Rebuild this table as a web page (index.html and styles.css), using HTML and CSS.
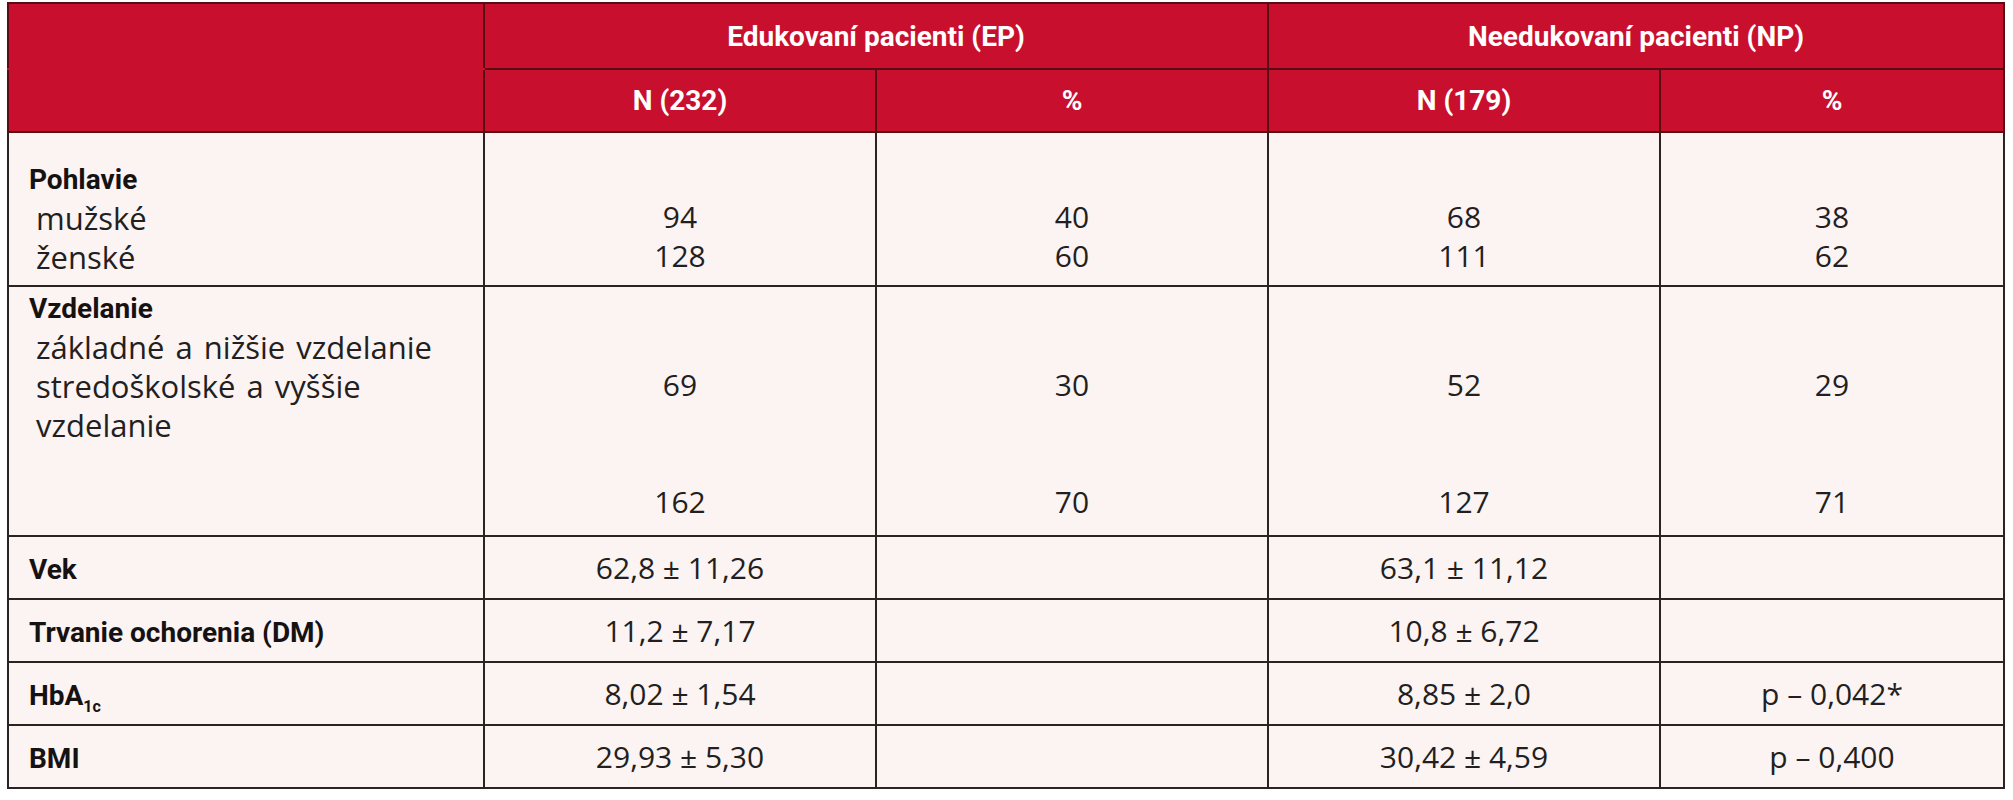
FILE: index.html
```html
<!DOCTYPE html>
<html lang="sk">
<head>
<meta charset="utf-8">
<title>Tabuľka</title>
<link rel="stylesheet" href="styles.css">
</head>
<body>
<table class="data">
  <colgroup>
    <col class="c-label">
    <col class="c-n">
    <col class="c-p">
    <col class="c-n">
    <col class="c-p2">
  </colgroup>
  <thead>
    <tr class="h1">
      <th></th>
      <th colspan="2">Edukovaní pacienti (EP)</th>
      <th colspan="2">Needukovaní pacienti (NP)</th>
    </tr>
    <tr class="h2">
      <th></th>
      <th>N (232)</th>
      <th>%</th>
      <th>N (179)</th>
      <th>%</th>
    </tr>
  </thead>
  <tbody>
    <tr class="multi r-sex">
      <td class="label"><b>Pohlavie</b><br><span class="sub">mužské</span><br><span class="sub">ženské</span></td>
      <td><br>94<br>128</td>
      <td><br>40<br>60</td>
      <td><br>68<br>111</td>
      <td><br>38<br>62</td>
    </tr>
    <tr class="multi r-edu">
      <td class="label"><b>Vzdelanie</b><br><span class="sub">základné a nižšie vzdelanie</span><br><span class="sub">stredoškolské a vyššie</span><br><span class="sub">vzdelanie</span></td>
      <td><br><br>69<br><br><br>162</td>
      <td><br><br>30<br><br><br>70</td>
      <td><br><br>52<br><br><br>127</td>
      <td><br><br>29<br><br><br>71</td>
    </tr>
    <tr class="single">
      <td class="label"><b>Vek</b></td>
      <td>62,8 ± 11,26</td>
      <td></td>
      <td>63,1 ± 11,12</td>
      <td></td>
    </tr>
    <tr class="single">
      <td class="label"><b>Trvanie ochorenia (DM)</b></td>
      <td>11,2 ± 7,17</td>
      <td></td>
      <td>10,8 ± 6,72</td>
      <td></td>
    </tr>
    <tr class="single">
      <td class="label"><b>HbA<sub>1c</sub></b></td>
      <td>8,02 ± 1,54</td>
      <td></td>
      <td>8,85 ± 2,0</td>
      <td>p – 0,042*</td>
    </tr>
    <tr class="single">
      <td class="label"><b>BMI</b></td>
      <td>29,93 ± 5,30</td>
      <td></td>
      <td>30,42 ± 4,59</td>
      <td>p – 0,400</td>
    </tr>
  </tbody>
</table>
</body>
</html>
```

FILE: styles.css
```css
html, body {
  margin: 0;
  padding: 0;
  background: #ffffff;
}

body {
  font-family: "Open Sans", "Liberation Sans", sans-serif;
  color: #231f20;
}

.data {
  margin: 2px 0 0 7px;
  width: 1996px;
  border-collapse: collapse;
  table-layout: fixed;
  font-size: 30px;
}

.c-label { width: 476px; }
.c-n { width: 392px; }
.c-p { width: 392px; }
.c-p2 { width: 344px; }

.data th,
.data td {
  border: 2px solid #2b2323;
  padding: 0;
}

.data thead th {
  background: #c8102e;
  color: #ffffff;
  font-family: Roboto, "Liberation Sans", sans-serif;
  font-size: 28px;
  font-weight: 700;
  text-align: center;
  vertical-align: middle;
  border-color: #5a0c14;
}

.data thead tr.h1 th:first-child {
  border-bottom-color: #c8102e;
}

.data thead tr.h2 th:first-child {
  border-top-color: #c8102e;
}

.h1 { height: 66px; }
.h2 { height: 63px; }

.data tbody td {
  background: #fcf3f3;
  text-align: center;
  font-weight: 400;
}

.data tbody td.label {
  text-align: left;
  padding-left: 20px;
}

.label b {
  font-family: Roboto, "Liberation Sans", sans-serif;
  font-size: 28px;
  font-weight: 700;
  color: #161212;
}

.sub {
  padding-left: 7px;
  font-size: 31px;
  word-spacing: 3px;
}

.multi td {
  vertical-align: top;
  line-height: 39px;
}

.r-sex { height: 154px; }
.r-sex td { padding-top: 25px; }

.r-edu { height: 250px; }
.r-edu td { padding-top: 0; }

.single { height: 63px; }
.single td { vertical-align: middle; }

sub {
  font-size: 16px;
  vertical-align: -7px;
  line-height: 0;
}
```
